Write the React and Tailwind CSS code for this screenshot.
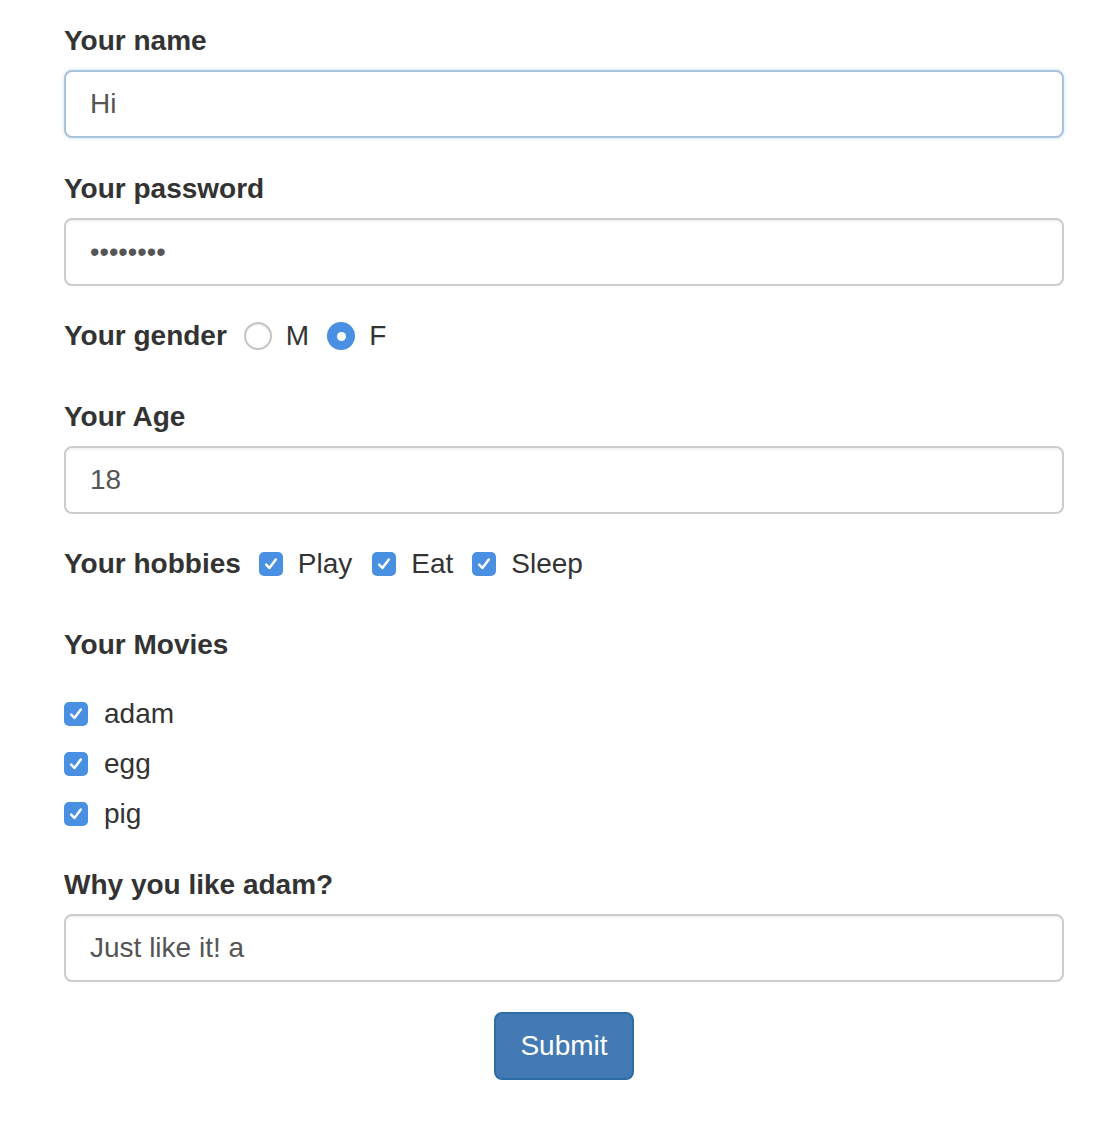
import React from 'react';

// Blue native-looking checkbox
function Check() {
  return (
    <span className="flex h-[24px] w-[24px] shrink-0 items-center justify-center rounded-[5px] bg-[#4a90e2]">
      <svg width="16" height="16" viewBox="0 0 16 16" fill="none">
        <path d="M3.2 8.6 L6.4 12 L12.8 3.6" stroke="white" strokeWidth="2.5" strokeLinecap="round" strokeLinejoin="round" />
      </svg>
    </span>
  );
}

function Radio({ checked }) {
  if (checked) {
    return (
      <span className="flex h-[28px] w-[28px] shrink-0 items-center justify-center rounded-full bg-[#4a90e2]">
        <span className="h-[9px] w-[9px] rounded-full bg-white" />
      </span>
    );
  }
  return (
    <span className="block h-[28px] w-[28px] shrink-0 rounded-full border-2 border-[#c4c4c4] bg-white shadow-[inset_0_1px_1px_rgba(0,0,0,0.08)]" />
  );
}

function Field({ children, focused }) {
  return (
    <div
      className={
        'flex h-[68px] w-full items-center rounded-[8px] border-2 bg-white px-[24px] text-[28px] text-[#555] ' +
        (focused
          ? 'border-[#a7c3dd] shadow-[0_0_4px_rgba(102,175,233,0.35)]'
          : 'border-[#cccccc] shadow-[inset_0_2px_2px_rgba(0,0,0,0.05)]')
      }
    >
      {children}
    </div>
  );
}

export default function App() {
  return (
    <div className="min-h-[1140px] bg-white font-['Liberation_Sans',Arial,sans-serif] text-[#333]">
      <div className="ml-[64px] w-[1000px] pt-[20px]">
        {/* Name */}
        <div className="h-[40px] text-[28px] font-bold leading-[42px]">Your name</div>
        <div className="mt-[10px]">
          <Field focused>Hi</Field>
        </div>

        {/* Password */}
        <div className="mt-[30px] h-[40px] text-[28px] font-bold leading-[42px]">Your password</div>
        <div className="mt-[10px]">
          <Field>
            <span className="text-[27px] leading-none text-[#555]">••••••••</span>
          </Field>
        </div>

        {/* Gender */}
        <div className="mt-[30px] flex h-[40px] items-center text-[28px] leading-[42px]">
          <span className="font-bold">Your gender</span>
          <span className="ml-[17px] flex items-center"><Radio /></span>
          <span className="ml-[14px]">M</span>
          <span className="ml-[18px] flex items-center"><Radio checked /></span>
          <span className="ml-[14px]">F</span>
        </div>

        {/* Age */}
        <div className="mt-[40px] h-[40px] text-[28px] font-bold leading-[42px]">Your Age</div>
        <div className="mt-[10px]">
          <Field>18</Field>
        </div>

        {/* Hobbies */}
        <div className="mt-[30px] flex h-[40px] items-center text-[28px] leading-[42px]">
          <span className="font-bold">Your hobbies</span>
          <span className="ml-[18px] flex items-center"><Check /></span>
          <span className="ml-[15px]">Play</span>
          <span className="ml-[20px] flex items-center"><Check /></span>
          <span className="ml-[15px]">Eat</span>
          <span className="ml-[19px] flex items-center"><Check /></span>
          <span className="ml-[15px]">Sleep</span>
        </div>

        {/* Movies */}
        <div className="mt-[40px] h-[40px] text-[28px] font-bold leading-[42px]">Your Movies</div>
        <div className="mt-[30px] flex flex-col gap-[10px]">
          {['adam', 'egg', 'pig'].map((m) => (
            <div key={m} className="flex h-[40px] items-center text-[28px] leading-[42px]">
              <Check />
              <span className="ml-[16px]">{m}</span>
            </div>
          ))}
        </div>

        {/* Why */}
        <div className="mt-[30px] h-[40px] text-[28px] font-bold leading-[42px]">Why you like adam?</div>
        <div className="mt-[10px]">
          <Field>Just like it! a</Field>
        </div>

        {/* Submit */}
        <div className="mt-[30px] flex justify-center">
          <button className="h-[68px] w-[140px] rounded-[8px] border-2 border-[#2e6da4] bg-[#437ab4] text-[28px] text-white">
            Submit
          </button>
        </div>
      </div>
    </div>
  );
}
